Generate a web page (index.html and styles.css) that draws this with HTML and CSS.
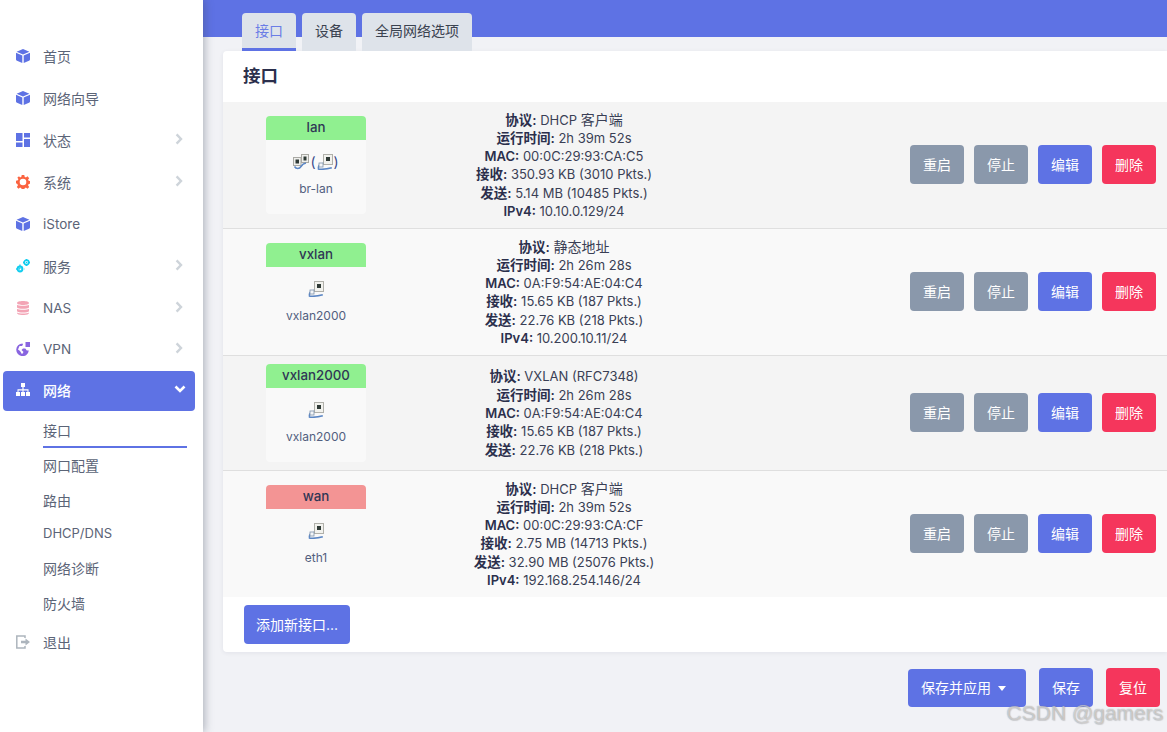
FILE: index.html
```html
<!DOCTYPE html>
<html lang="zh-CN">
<head>
<meta charset="utf-8">
<title>接口</title>
<link rel="stylesheet" href="styles.css">
</head>
<body>
<svg class="defs" width="0" height="0" aria-hidden="true">
  <symbol id="cube" viewBox="0 0 14 14"><path fill="#5e72e4" d="M7 0 13.400 2.700 7 5.400.6 2.700zM0 3.800 6.300 6.500V14L1 11.800Q0 11.400 0 10.400zM14 3.800 7.700 6.500V14L13 11.800Q14 11.400 14 10.400z"/></symbol>
  <symbol id="chev" viewBox="0 0 8 12"><path fill="none" stroke="currentColor" stroke-width="2.400" d="M1.600 1.400 6 6l-4.400 4.600"/></symbol>
  <symbol id="eth" viewBox="0 0 16 16">
    <rect x="6.500" y=".5" width="9" height="10" fill="#f2f2ee" stroke="#b0b0aa"/>
    <rect x="9" y="3" width="4" height="4" fill="#2f3a36"/>
    <path fill="none" stroke="#5b86c4" stroke-width="1.600" d="M.8 15c3.500.4 9 .2 14-1.200M1.500 14.500c-.5-2.500 1.500-5 4.500-5"/>
    <rect x="2" y="9" width="4" height="4" fill="#f4f6f8" stroke="#7f93ab" stroke-width=".8"/>
  </symbol>
  <symbol id="eth2" viewBox="0 0 16 16">
    <rect x=".5" y="3.500" width="7.500" height="8" fill="#efefec" stroke="#a9a9a4"/>
    <rect x="2.500" y="5.500" width="3.500" height="4" fill="#2f3a36"/>
    <rect x="8.500" y=".5" width="7" height="8" fill="#efefec" stroke="#a9a9a4"/>
    <rect x="10.500" y="2.500" width="3" height="4" fill="#2f3a36"/>
    <path fill="none" stroke="#5b86c4" stroke-width="1.500" d="M1.500 12.500c1.500 2.500 5 2.500 6.500 0s2.500-3 5-3.500"/>
  </symbol>
</svg>
<div class="app">
  <aside class="sidebar">
    <ul class="menu">
      <li class="item"><svg class="ico"><use href="#cube"/></svg>首页</li>
      <li class="item"><svg class="ico"><use href="#cube"/></svg>网络向导</li>
      <li class="item"><svg class="ico" viewBox="0 0 14 14"><path fill="#5e72e4" d="M0 0h6.500v8H0zM0 9.500h6.500V14H0zM8 0h6v4.500H8zM8 6h6v8H8z"/></svg>状态<svg class="chev"><use href="#chev"/></svg></li>
      <li class="item"><svg class="ico" viewBox="0 0 14 14"><path fill="#fb6340" fill-rule="evenodd" d="M5.700 0h2.600l.3 1.800 1.300.6L11.500 1.300l1.700 1.900-1.100 1.400.5 1.200 1.900.4v2.500l-1.900.4-.5 1.300 1.100 1.500-1.700 1.800-1.600-1.100-1.300.6-.3 1.800H5.700l-.3-1.800-1.300-.6-1.600 1.100-1.700-1.800 1.100-1.500-.5-1.300L0 8.200V5.700l1.900-.4.500-1.200L1.300 2.700 3 1.300l1.100 1.100 1.300-.6zM7 3.700a3.300 3.300 0 1 0 0 6.600 3.300 3.300 0 0 0 0-6.600z"/></svg>系统<svg class="chev"><use href="#chev"/></svg></li>
      <li class="item"><svg class="ico"><use href="#cube"/></svg><span class="lat-label">iStore</span></li>
      <li class="item"><svg class="ico" viewBox="0 0 14 14"><g fill="none" stroke="#11cdef"><circle cx="4" cy="10" r="2.500" stroke-width="1.800"/><circle cx="10.500" cy="3.500" r="2.300" stroke-width="1.700"/><path stroke-width="1.300" stroke-dasharray="1.400 1.500" d="M4 5.500v9M-.500 10h9M10.500 0v7M7 3.500h7"/></g></svg>服务<svg class="chev"><use href="#chev"/></svg></li>
      <li class="item tight"><svg class="ico" viewBox="0 0 14 14"><path fill="#f3a4b5" d="M7 0c3.300 0 6 .8 6 2s-2.700 2-6 2-6-.8-6-2 2.700-2 6-2zM1 3.700C2.500 5 11.500 5 13 3.700v2.800c-1 1.800-11 1.800-12 0zM1 7.800c1.500 1.300 10.500 1.300 12 0v2.400c-1 1.800-11 1.800-12 0zM1 11.400c1.500 1.300 10.500 1.300 12 0V12c0 2.700-12 2.700-12 0z"/></svg><span class="lat-label">NAS</span><svg class="chev"><use href="#chev"/></svg></li>
      <li class="item tight"><svg class="ico" viewBox="0 0 14 14"><path fill="#8965e0" d="M6.500 1.500a6.300 6.300 0 1 0 6.300 7h-2l-1.500-2H7L5.500 8 7.500 10 6 12.300 4 9 2 7.500 3.500 4H6l1-1.500z"/><path fill="#8965e0" d="M9.500 0H14v5H9.500z"/></svg><span class="lat-label">VPN</span><svg class="chev"><use href="#chev"/></svg></li>
      <li class="item active"><svg class="ico" viewBox="0 0 14 14"><path fill="#fff" d="M5 0h4v4H7.600v2.300H12.500V9H14v4h-4V9h1.500V7.500h-4V9H9v4H5V9h1.500V7.500h-4V9H4v4H0V9h1.500V6.300h4.900V4H5z"/></svg>网络<svg class="chev down" viewBox="0 0 12 8"><path fill="none" stroke="#fff" stroke-width="2.600" d="M1.500 1.500 6 6l4.500-4.500"/></svg></li>
      <li class="sub current">接口</li>
      <li class="sub">网口配置</li>
      <li class="sub">路由</li>
      <li class="sub latin">DHCP/DNS</li>
      <li class="sub">网络诊断</li>
      <li class="sub">防火墙</li>
      <li class="item logout"><svg class="ico" viewBox="0 0 14 14"><path fill="none" stroke="#adb5bd" stroke-width="1.500" d="M9 3V1H.8v12H9v-2"/><path fill="#adb5bd" d="M5 5.800h4.500V3.500L14 7l-4.500 3.500V8.200H5z"/></svg>退出</li>
    </ul>
  </aside>
  <main class="main">
    <header class="band">
      <nav class="tabs">
        <a class="tab on">接口</a>
        <a class="tab">设备</a>
        <a class="tab">全局网络选项</a>
      </nav>
    </header>
    <section class="card">
      <h3 class="title">接口</h3>
      <div class="row odd">
        <div class="cell-dev">
          <div class="dev">
            <div class="dev-head up">lan</div>
            <div class="dev-body"><div class="dev-icons"><svg class="port"><use href="#eth2"/></svg> (<svg class="port"><use href="#eth"/></svg>)</div><div class="dev-name">br-lan</div></div>
          </div>
        </div>
        <div class="info">
          <div class="ln"><b>协议:</b> DHCP <span class="zh">客户端</span></div>
          <div class="ln"><b>运行时间:</b> 2h 39m 52s</div>
          <div class="ln lat"><b>MAC:</b> 00:0C:29:93:CA:C5</div>
          <div class="ln"><b>接收:</b> 350.93 KB (3010 Pkts.)</div>
          <div class="ln"><b>发送:</b> 5.14 MB (10485 Pkts.)</div>
          <div class="ln lat"><b>IPv4:</b> 10.10.0.129/24</div>
        </div>
        <div class="actions"><button class="btn grey">重启</button><button class="btn grey">停止</button><button class="btn blue">编辑</button><button class="btn red">删除</button></div>
      </div>
      <div class="row">
        <div class="cell-dev">
          <div class="dev">
            <div class="dev-head up">vxlan</div>
            <div class="dev-body"><div class="dev-icons"><svg class="port"><use href="#eth"/></svg></div><div class="dev-name">vxlan2000</div></div>
          </div>
        </div>
        <div class="info">
          <div class="ln"><b>协议:</b> <span class="zh">静态地址</span></div>
          <div class="ln"><b>运行时间:</b> 2h 26m 28s</div>
          <div class="ln lat"><b>MAC:</b> 0A:F9:54:AE:04:C4</div>
          <div class="ln"><b>接收:</b> 15.65 KB (187 Pkts.)</div>
          <div class="ln"><b>发送:</b> 22.76 KB (218 Pkts.)</div>
          <div class="ln lat"><b>IPv4:</b> 10.200.10.11/24</div>
        </div>
        <div class="actions"><button class="btn grey">重启</button><button class="btn grey">停止</button><button class="btn blue">编辑</button><button class="btn red">删除</button></div>
      </div>
      <div class="row odd">
        <div class="cell-dev">
          <div class="dev">
            <div class="dev-head up">vxlan2000</div>
            <div class="dev-body"><div class="dev-icons"><svg class="port"><use href="#eth"/></svg></div><div class="dev-name">vxlan2000</div></div>
          </div>
        </div>
        <div class="info">
          <div class="ln"><b>协议:</b> VXLAN (RFC7348)</div>
          <div class="ln"><b>运行时间:</b> 2h 26m 28s</div>
          <div class="ln lat"><b>MAC:</b> 0A:F9:54:AE:04:C4</div>
          <div class="ln"><b>接收:</b> 15.65 KB (187 Pkts.)</div>
          <div class="ln"><b>发送:</b> 22.76 KB (218 Pkts.)</div>
        </div>
        <div class="actions"><button class="btn grey">重启</button><button class="btn grey">停止</button><button class="btn blue">编辑</button><button class="btn red">删除</button></div>
      </div>
      <div class="row last">
        <div class="cell-dev">
          <div class="dev">
            <div class="dev-head down-state">wan</div>
            <div class="dev-body"><div class="dev-icons"><svg class="port"><use href="#eth"/></svg></div><div class="dev-name">eth1</div></div>
          </div>
        </div>
        <div class="info">
          <div class="ln"><b>协议:</b> DHCP <span class="zh">客户端</span></div>
          <div class="ln"><b>运行时间:</b> 2h 39m 52s</div>
          <div class="ln lat"><b>MAC:</b> 00:0C:29:93:CA:CF</div>
          <div class="ln"><b>接收:</b> 2.75 MB (14713 Pkts.)</div>
          <div class="ln"><b>发送:</b> 32.90 MB (25076 Pkts.)</div>
          <div class="ln lat"><b>IPv4:</b> 192.168.254.146/24</div>
        </div>
        <div class="actions"><button class="btn grey">重启</button><button class="btn grey">停止</button><button class="btn blue">编辑</button><button class="btn red">删除</button></div>
      </div>
      <div class="card-foot"><button class="btn blue add">添加新接口...</button></div>
    </section>
    <footer class="page-actions">
      <button class="btn blue apply">保存并应用<span class="caret"></span></button>
      <button class="btn blue">保存</button>
      <button class="btn red">复位</button>
    </footer>
  </main>
</div>
<div class="watermark">CSDN @gamers</div>
</body>
</html>
```
FILE: styles.css
```css
* { box-sizing: border-box; }
html, body { margin: 0; height: 100%; overflow: hidden; }
body {
  font-family: Inter, "Noto Sans CJK SC", sans-serif;
  font-size: 14px;
  color: #32325d;
  background: #f1f2f6;
}
.defs { position: absolute; }
.app { display: flex; height: 732px; width: 1167px; overflow: hidden; }

.sidebar {
  width: 203px;
  flex: none;
  background: #fff;
  box-shadow: 2px 0 8px rgba(60, 70, 90, .35);
  position: relative;
  z-index: 2;
}
.menu { list-style: none; margin: 0; padding: 35px 0 0; color: #5b6477; }
.item {
  height: 42px;
  display: flex;
  align-items: center;
  padding-left: 16px;
  margin: 0 8px 0 0;
}
.item.tight { height: 41px; }
.lat-label { font-size: 13.500px; }
.ico { width: 14px; height: 14px; margin-right: 13px; flex: none; }
.chev { width: 8px; height: 12px; margin: 0 12px 2px auto; color: #ced4da; }
.chev.down { width: 12px; height: 8px; margin: 0 9px 2px auto; }
.item.active {
  height: 40px;
  margin: 2px 8px 3px 3px;
  padding: 0 0 2px 13px;
  background: #5e72e4;
  color: #fff;
  font-weight: 500;
  border-radius: 4px;
}
.sub { height: 35px; margin: 0 16px 0 43px; display: flex; align-items: center; }
.sub.current { height: 34px; border-bottom: 2px solid #5e72e4; margin-bottom: -1px; }
.sub.latin { font-size: 13px; height: 33px; padding-bottom: 1px; }
.item.logout { margin-top: 3px; height: 38px; }

.main { flex: 1; min-width: 0; position: relative; }
.band { height: 37px; background: #5e72e4; padding: 13px 0 0 39px; }
.tabs { display: flex; gap: 6px; }
.tab {
  height: 38px;
  padding: 0 13px;
  line-height: 35px;
  background: #dee3ea;
  color: #3a4250;
  border-radius: 4px 4px 0 0;
}
.tab.on { color: #6b7de6; border-bottom: 3px solid #5e72e4; }

.card {
  margin: 14px 0 0 20px;
  background: #fff;
  border-radius: 4px 0 0 4px;
  box-shadow: 0 1px 4px rgba(50, 50, 93, .08);
}
.title { margin: 0; height: 51px; padding-left: 20px; line-height: 50px; font-size: 17.500px; font-weight: 600; color: #2b2f4c; }
.row {
  display: flex;
  align-items: center;
  padding: 8px 0;
  background: #f9f9f9;
  border-bottom: 1px solid #dfdfdf;
}
.row.odd { background: #f4f4f4; }
.row.last { border-bottom: 0; }
.cell-dev { width: 186px; flex: none; display: flex; justify-content: center; }
.dev { width: 100px; height: 98px; background: #f9f9f9; border-radius: 4px; overflow: hidden; text-align: center; }
.dev-head { height: 24px; line-height: 22px; font-size: 13.300px; font-weight: 500; color: #2f3655; }
.dev-head.up { background: #90f090; }
.dev-head.down-state { background: #f39494; }
.dev-body { padding-top: 13px; color: #525f7f; font-size: 12px; }
.dev-icons { height: 17px; display: flex; justify-content: center; align-items: center; gap: 1px; color: #3a4a8a; font-size: 14px; }
.port { width: 16px; height: 16px; }
.dev-name { margin-top: 11px; line-height: 16px; }
.info { width: 310px; flex: none; text-align: center; color: #3a3f55; font-size: 13px; }
.ln { height: 19px; line-height: 19px; }
.ln.lat { height: 17px; line-height: 17px; }
.ln.lat b { font-size: 13px; }
.info b { font-weight: 600; color: #2b2f4c; font-size: 13.500px; }
.zh { font-size: 14px; }
.actions { flex: 1; display: flex; justify-content: flex-end; gap: 10px; padding: 0 11px 1px 0; }
.btn {
  height: 39px;
  min-width: 54px;
  padding: 0 13px 2px;
  border: 0;
  border-radius: 4px;
  color: #fff;
  font: 14px Inter, "Noto Sans CJK SC", sans-serif;
}
.grey { background: #8a98ab; }
.blue { background: #5e72e4; }
.red { background: #f5365c; }
.card-foot { padding: 8px 0 8px 21px; height: 55px; }
.add { width: 106px; padding: 0 0 2px; }
.page-actions { display: flex; justify-content: flex-end; align-items: flex-start; gap: 13px; padding: 16px 7px 0 0; }
.apply { height: 38px; width: 118px; margin-top: 1px; padding: 0 0 2px 13px; text-align: left; }
.caret { display: inline-block; margin-left: 7px; border: 4.500px solid transparent; border-top: 5px solid #fff; border-bottom: 0; vertical-align: 2px; }

.watermark {
  position: absolute;
  right: 4px;
  bottom: 7px;
  font: 21px "Liberation Sans", sans-serif;
  color: rgba(255, 255, 255, .45);
  text-shadow: 0 0 1px rgba(120, 120, 120, .7), 1px 1px 1px rgba(140, 140, 140, .3);
  z-index: 5;
}
```
